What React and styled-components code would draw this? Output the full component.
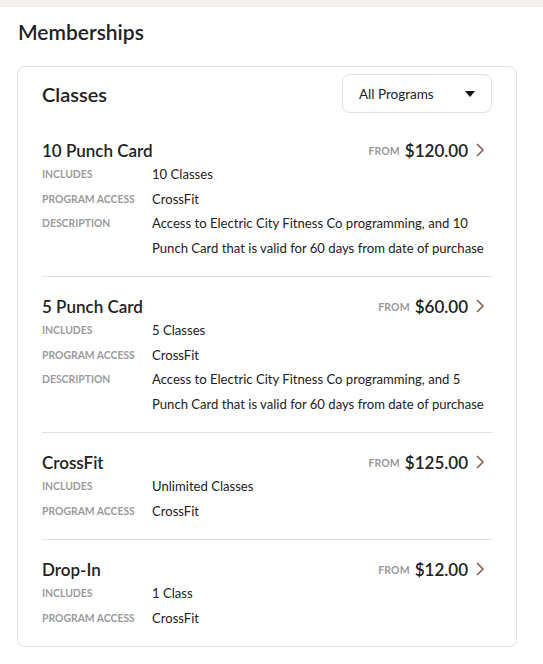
import React from "react";
import styled, { createGlobalStyle } from "styled-components";

const Global = createGlobalStyle`
  html, body { margin: 0; padding: 0; background: #fff; }
  body { font-family: "Lato", "Liberation Sans", sans-serif; color: #222; }
`;

const TopBand = styled.div`
  height: 7px;
  background: #f4f1ed;
`;

const Page = styled.div`
  padding: 0 26px 0 17px;
`;

const PageTitle = styled.h1`
  margin: 0;
  padding: 12px 0 0 1px;
  height: 45px;
  box-sizing: border-box;
  font-size: 21px;
  font-weight: 600;
  color: #222;
  line-height: 26px;
`;

const Card = styled.div`
  margin-top: 14px;
  border: 1px solid #e4e1dc;
  border-radius: 8px;
  padding: 0 24px;
  background: #fff;
`;

const Header = styled.div`
  display: flex;
  align-items: center;
  justify-content: space-between;
  padding: 7px 0 8px;
`;

const SectionTitle = styled.h2`
  margin: 0;
  font-size: 20px;
  font-weight: 600;
  color: #222;
`;

const Select = styled.div`
  width: 150px;
  height: 39px;
  box-sizing: border-box;
  border: 1px solid #e4e1dc;
  border-radius: 8px;
  display: flex;
  align-items: center;
  justify-content: space-between;
  padding: 0 16px 0 16px;
  font-size: 13.5px;
  color: #222;
`;

const Caret = styled.span`
  width: 0;
  height: 0;
  border-left: 5px solid transparent;
  border-right: 5px solid transparent;
  border-top: 6px solid #111;
`;

const Item = styled.div`
  padding: 18px 0 16px;
  border-top: ${(p) => (p.$first ? "none" : "1px solid #e4e1dc")};
`;

const ItemTop = styled.div`
  display: flex;
  align-items: center;
  justify-content: space-between;
  height: 22px;
  margin-bottom: 1px;
`;

const ItemName = styled.div`
  font-size: 17px;
  font-weight: 600;
  color: #222;
`;

const Price = styled.div`
  display: flex;
  align-items: center;
  gap: 5px;
  margin-right: 7px;
`;

const From = styled.span`
  font-size: 10.5px;
  font-weight: 700;
  color: #999;
  letter-spacing: 0.1px;
  margin-top: 1px;
`;

const Amount = styled.span`
  font-size: 17px;
  font-weight: 600;
  color: #222;
`;

const Chevron = styled.svg`
  margin-left: 2px;
  width: 10px;
  height: 16px;
`;

const Row = styled.div`
  display: grid;
  grid-template-columns: 110px 1fr;
  line-height: 24.5px;
`;

const Label = styled.div`
  font-size: 10.4px;
  font-weight: 700;
  text-transform: uppercase;
  color: #9b9b9b;
`;

const Value = styled.div`
  font-size: 13.1px;
  color: #222;
`;

const items = [
  {
    name: "10 Punch Card",
    price: "$120.00",
    rows: [
      ["Includes", "10 Classes"],
      ["Program Access", "CrossFit"],
      [
        "Description",
        "Access to Electric City Fitness Co programming, and 10 Punch Card that is valid for 60 days from date of purchase",
      ],
    ],
  },
  {
    name: "5 Punch Card",
    price: "$60.00",
    rows: [
      ["Includes", "5 Classes"],
      ["Program Access", "CrossFit"],
      [
        "Description",
        "Access to Electric City Fitness Co programming, and 5 Punch Card that is valid for 60 days from date of purchase",
      ],
    ],
  },
  {
    name: "CrossFit",
    price: "$125.00",
    rows: [
      ["Includes", "Unlimited Classes"],
      ["Program Access", "CrossFit"],
    ],
  },
  {
    name: "Drop-In",
    price: "$12.00",
    rows: [
      ["Includes", "1 Class"],
      ["Program Access", "CrossFit"],
    ],
  },
];

export default function App() {
  return (
    <>
      <Global />
      <TopBand />
      <Page>
        <PageTitle>Memberships</PageTitle>
        <Card>
          <Header>
            <SectionTitle>Classes</SectionTitle>
            <Select>
              All Programs
              <Caret />
            </Select>
          </Header>
          {items.map((it, i) => (
            <Item key={it.name} $first={i === 0}>
              <ItemTop>
                <ItemName>{it.name}</ItemName>
                <Price>
                  <From>FROM</From>
                  <Amount>{it.price}</Amount>
                  <Chevron viewBox="0 0 10 16">
                    <path d="M2 2 L8 8 L2 14" fill="none" stroke="#86594b" strokeWidth="1.5" />
                  </Chevron>
                </Price>
              </ItemTop>
              {it.rows.map(([l, v]) => (
                <Row key={l}>
                  <Label>{l}</Label>
                  <Value>{v}</Value>
                </Row>
              ))}
            </Item>
          ))}
        </Card>
      </Page>
    </>
  );
}
